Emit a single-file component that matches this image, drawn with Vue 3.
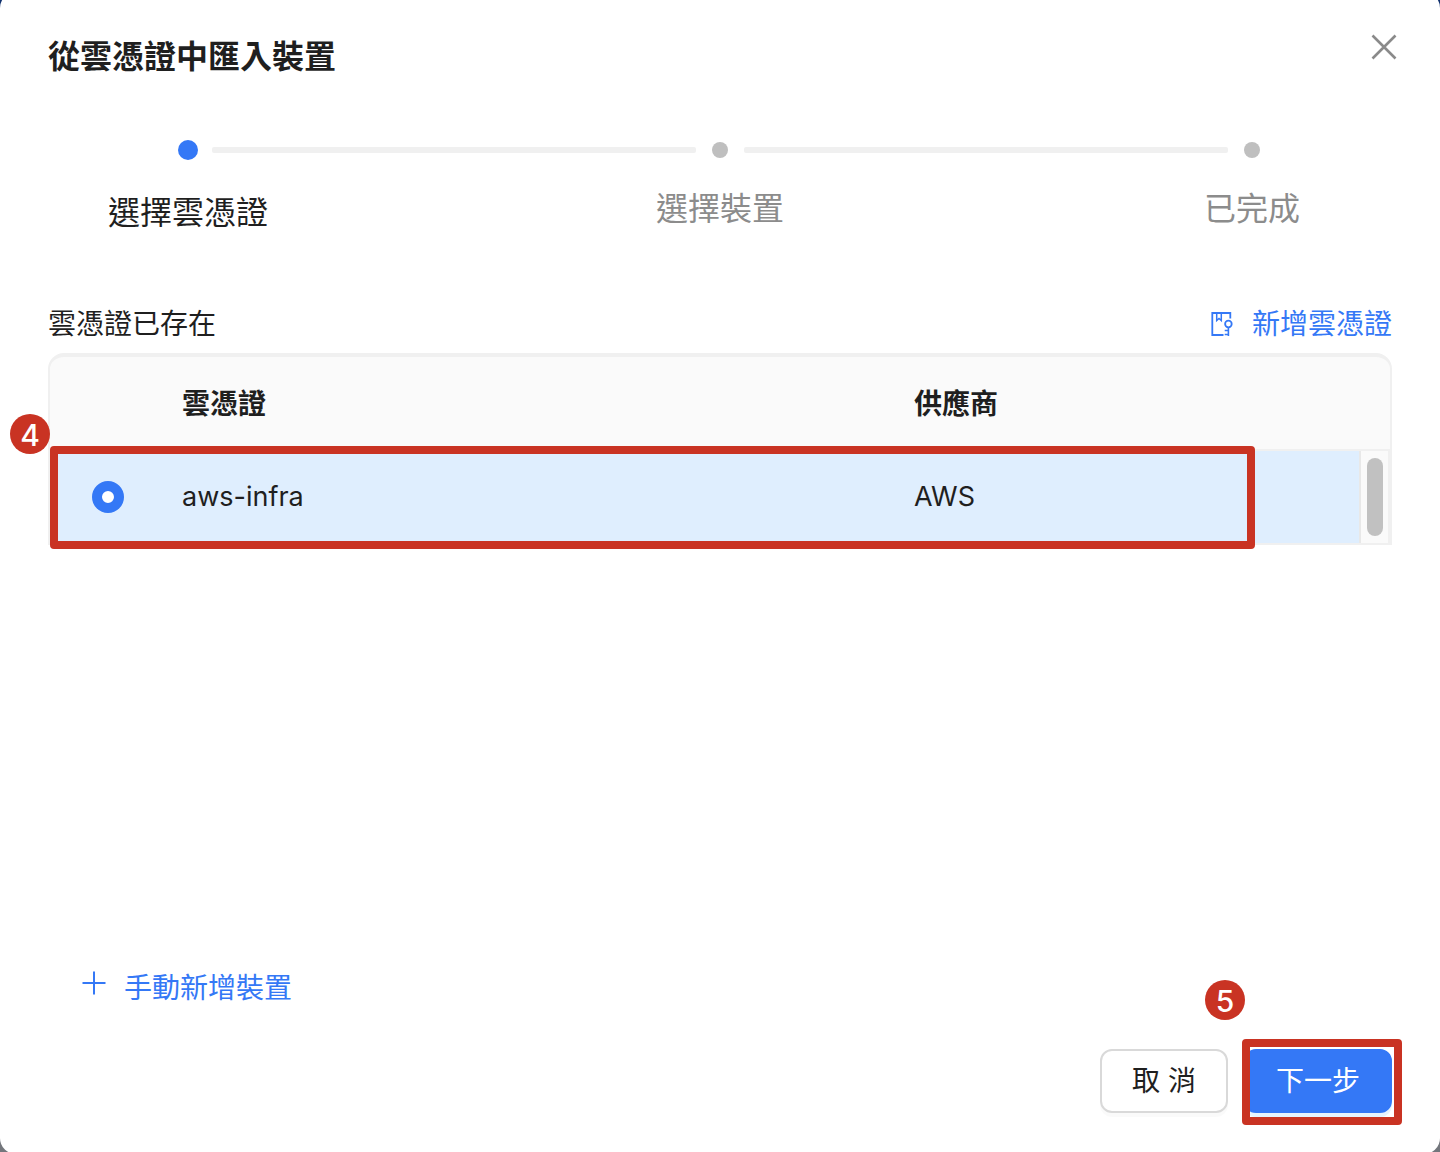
<script setup>
import { ref } from 'vue'

const steps = ['選擇雲憑證', '選擇裝置', '已完成']
const current = ref(0)
const credentials = [{ name: 'aws-infra', vendor: 'AWS' }]
const selected = ref('aws-infra')
</script>

<template>
  <div class="backdrop">
    <main class="dialog" role="dialog" aria-labelledby="dialog-title">
      <header class="head">
        <h1 id="dialog-title">從雲憑證中匯入裝置</h1>
        <button class="close" type="button" aria-label="關閉">
          <svg viewBox="0 0 28 28" width="28" height="28" aria-hidden="true">
            <path d="M2.5 2.5 25.5 25.5M25.5 2.5 2.5 25.5" fill="none" stroke="#8a8a8a" stroke-width="2.6" />
          </svg>
        </button>
      </header>

      <ol class="steps">
        <li v-for="(step, i) in steps" :key="step" class="step" :class="{ active: i === current }">
          <div class="marker">
            <span class="dot-box"><span class="dot"></span></span>
            <span v-if="i < steps.length - 1" class="tail"></span>
          </div>
          <div class="step-label">{{ step }}</div>
        </li>
      </ol>

      <section class="credentials">
        <div class="section-head">
          <h2>雲憑證已存在</h2>
          <a href="#" class="link">
            <svg viewBox="0 0 24 28" width="24" height="28" aria-hidden="true" fill="none" stroke="currentColor" stroke-width="1.8">
              <path d="M20.3 8.500V3H2.300v22H13.500" />
              <path d="M6.700 3v7.500l2.300-2 2.300 2V3" stroke-width="1.500" />
              <circle cx="18.400" cy="14" r="3.300" />
              <path d="M18.400 17.300V26M18.400 20.500H14.700M18.400 24.500H14.700" stroke-width="1.600" />
            </svg>
            新增雲憑證
          </a>
        </div>

        <div class="table-frame">
          <table>
            <colgroup>
              <col class="col-radio" />
              <col />
              <col class="col-vendor" />
              <col class="col-scroll" />
            </colgroup>
            <thead>
              <tr>
                <th></th>
                <th scope="col">雲憑證</th>
                <th scope="col">供應商</th>
                <th></th>
              </tr>
            </thead>
            <tbody>
              <tr v-for="item in credentials" :key="item.name">
                <td class="radio-cell">
                  <input :id="item.name" v-model="selected" type="radio" name="credential" :value="item.name" />
                </td>
                <td><label :for="item.name">{{ item.name }}</label></td>
                <td>{{ item.vendor }}</td>
                <td class="scroll-cell"><span class="thumb"></span></td>
              </tr>
            </tbody>
          </table>
          <span class="outline outline-row"></span>
          <span class="badge badge-row">4</span>
        </div>
      </section>

      <a href="#" class="link manual">
        <svg viewBox="0 0 24 24" width="24" height="24" aria-hidden="true">
          <path d="M12 0.500V23.500M0.500 12H23.500" fill="none" stroke="currentColor" stroke-width="2" />
        </svg>
        手動新增裝置
      </a>

      <footer class="actions">
        <button class="btn" type="button">取 消</button>
        <div class="next-wrap">
          <button class="btn primary" type="button">下一步</button>
          <span class="outline outline-next"></span>
          <span class="badge badge-next">5</span>
        </div>
      </footer>
    </main>
  </div>
</template>

<style>
body {
  margin: 0;
}
</style>

<style scoped>
* {
  box-sizing: border-box;
}

.backdrop {
  display: flow-root;
  height: 100vh;
  overflow: hidden;
  background: linear-gradient(#12326e 0 20%, #73767c 80%);
  font-family: Inter, "Noto Sans CJK TC", sans-serif;
  font-size: 28px;
  line-height: 44px;
  color: #1f1f1f;
}

.dialog {
  display: flex;
  flex-direction: column;
  min-height: calc(100vh + 10px);
  margin: -8px 0 -2px;
  padding: 41px 48px;
  border-radius: 16px;
  background: #fff;
}

.head {
  display: flex;
  justify-content: space-between;
  align-items: flex-start;
}

h1,
h2 {
  margin: 0;
  font-size: 32px;
  line-height: 48px;
  font-weight: 700;
}

.close {
  display: flex;
  margin: 0 -6px 0 0;
  padding: 0;
  border: 0;
  background: none;
}

.steps {
  display: flex;
  margin: 59px 0 0;
  padding: 0;
  list-style: none;
  font-size: 32px;
  line-height: 48px;
}

.step {
  flex: 1;
  color: #8c8c8c;
}

.step:last-child {
  flex: 0 0 280px;
}

.marker {
  display: flex;
  align-items: center;
  gap: 14px;
  height: 20px;
  margin: 0 -116px 0 130px;
}

.dot-box {
  display: flex;
  flex: none;
  justify-content: center;
  width: 20px;
}

.dot {
  width: 16px;
  height: 16px;
  border-radius: 50%;
  background: #bfbfbf;
}

.tail {
  flex: 1;
  height: 6px;
  border-radius: 2px;
  background: #f0f0f0;
}

.step-label {
  width: 280px;
  padding-top: 25px;
  text-align: center;
}

.active {
  color: #1f1f1f;
}

.active .dot {
  width: 20px;
  height: 20px;
  background: #3478f6;
}

.active .step-label {
  padding-top: 29px;
}

.credentials {
  flex: 1;
  margin-top: 65px;
}

.section-head {
  display: flex;
  justify-content: space-between;
  margin-bottom: 7px;
}

h2 {
  font-size: 28px;
  line-height: 44px;
  font-weight: 400;
}

.link {
  display: flex;
  align-items: center;
  gap: 18px;
  color: #3478f6;
  text-decoration: none;
}

.table-frame {
  position: relative;
  border: 2px solid #f0f0f0;
  border-top-width: 4px;
  border-radius: 16px 16px 0 0;
  background: #fafafa;
}

table {
  width: 100%;
  table-layout: fixed;
  border-collapse: separate;
  border-spacing: 0;
}

.col-radio {
  width: 116px;
}

.col-vendor {
  width: 461px;
}

.col-scroll {
  width: 31px;
}

th,
td {
  height: 94px;
  padding: 0 16px;
  text-align: left;
}

th {
  padding-top: 2px;
  border-bottom: 2px solid #f0f0f0;
  font-weight: 700;
}

td {
  height: 92px;
  background: #dfeefe;
  font-size: 27px;
}

td.radio-cell {
  text-align: center;
}

.radio-cell input {
  display: block;
  appearance: none;
  width: 32px;
  height: 32px;
  margin: 0 auto;
  border: 2px solid #d9d9d9;
  border-radius: 50%;
  background: #fff;
}

.radio-cell input:checked {
  border: 10px solid #3478f6;
}

td.scroll-cell {
  padding: 0 4px 0 5px;
  border-right: 2px solid #f0f0f0;
  border-left: 2px solid #e8e8e8;
  background: #fafafa;
}

.thumb {
  display: block;
  width: 16px;
  height: 78px;
  margin: 0 auto;
  border-radius: 8px;
  background: #c1c1c1;
}

.outline {
  position: absolute;
  border: 8px solid #c93323;
  border-radius: 4px;
  pointer-events: none;
}

.outline-row {
  top: 89px;
  right: 135px;
  bottom: -6px;
  left: 0;
}

.badge {
  position: absolute;
  width: 40px;
  height: 40px;
  border-radius: 50%;
  background: #c93323;
  color: #fff;
  font-size: 30px;
  font-weight: 500;
  line-height: 42px;
  text-align: center;
}

.badge-row {
  top: 57px;
  left: -40px;
}

.manual {
  align-self: flex-start;
  margin: 0 0 39px 34px;
}

.manual svg {
  margin-bottom: 10px;
}

.actions {
  display: flex;
  justify-content: flex-end;
  gap: 16px;
}

.next-wrap {
  position: relative;
  display: flex;
}

.btn {
  height: 64px;
  padding: 0 30px;
  border: 2px solid #d9d9d9;
  border-radius: 12px;
  background: #fff;
  box-shadow: 0 4px 0 rgba(0, 0, 0, 0.02);
  color: #1f1f1f;
  font: inherit;
}

.primary {
  border-color: #3478f6;
  background: #3478f6;
  box-shadow: 0 4px 0 rgba(5, 145, 255, 0.1);
  color: #fff;
}

.outline-next {
  top: -10px;
  right: -10px;
  bottom: -12px;
  left: -2px;
}

.badge-next {
  top: -69px;
  left: -39px;
}
</style>
